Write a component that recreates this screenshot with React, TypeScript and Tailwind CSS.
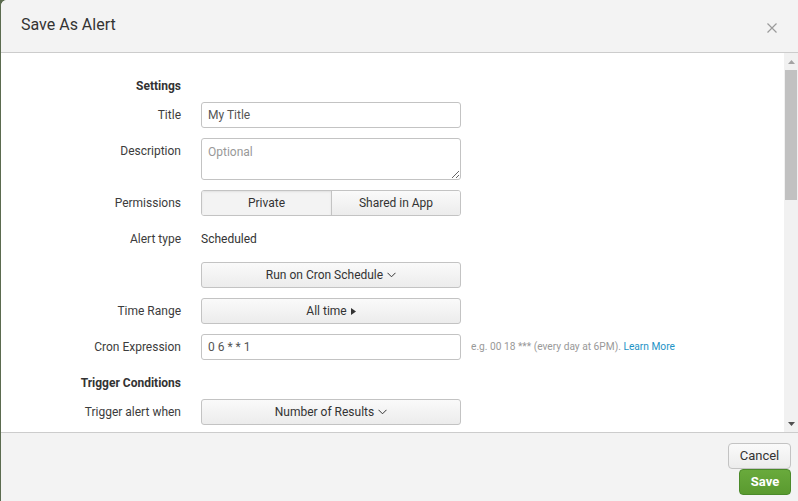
import React from 'react';

const ChevronDown = () => (
    <svg width="9" height="6" viewBox="0 0 9 6" fill="none" stroke="currentColor" strokeWidth="1" className="ml-1 inline-block">
        <path d="M0.5 0.8 4.5 4.8 8.5 0.8" />
    </svg>
);

const CaretRight = () => (
    <svg width="5" height="7" viewBox="0 0 5 7" fill="currentColor" className="ml-1 inline-block">
        <path d="M0 0 5 3.5 0 7z" />
    </svg>
);

const Label = ({ children, bold }: { children: React.ReactNode; bold?: boolean }) => (
    <div className={`w-[180px] shrink-0 text-right ${bold ? 'font-bold text-[#333]' : 'text-[#3c3c3c]'}`}>{children}</div>
);

const btn = "w-[260px] h-[26px] rounded-[3px] border border-[#c3c3c3] bg-gradient-to-b from-[#fafafa] to-[#ececec] text-[12px] text-[#333] flex items-center justify-center";

const App = () => {
    return (
        <div className="w-[798px] h-[501px] bg-[#5b6b4f] overflow-hidden" style={{ fontFamily: 'Roboto, "Liberation Sans", sans-serif' }}>
            <div className="ml-[1px] h-full bg-white rounded-tl-[6px] flex flex-col overflow-hidden">
                {/* header */}
                <div className="h-[53px] shrink-0 bg-[#f3f3f3] border-b border-[#cccccc] flex items-center pl-[20px] pr-[21px]">
                    <h1 className="text-[16px] text-[#333] flex-1 -mt-[3px]">Save As Alert</h1>
                    <svg width="10" height="10" viewBox="0 0 10 10" stroke="#9a9a9a" strokeWidth="1.2" className="mt-[4px]">
                        <path d="M0.5 0.5 9.5 9.5M9.5 0.5 0.5 9.5" />
                    </svg>
                </div>

                {/* body */}
                <div className="flex-1 flex min-h-0">
                    <div className="flex-1 pt-[23px] text-[12px]">
                        <div className="flex items-center h-[20px] mb-[6px]"><Label bold>Settings</Label></div>

                        <div className="flex items-center gap-[20px] mb-[10px]">
                            <Label>Title</Label>
                            <div className="w-[260px] h-[26px] rounded-[3px] border border-[#c3c3c3] px-[6px] flex items-center text-[#555]">My Title</div>
                        </div>

                        <div className="flex items-start gap-[20px] mb-[10px]">
                            <div className="pt-[4px]"><Label>Description</Label></div>
                            <textarea placeholder="Optional" className="w-[260px] h-[42px] rounded-[3px] border border-[#c3c3c3] px-[6px] py-[4px] text-[12px] text-[#555] placeholder:text-[#999] outline-none" />
                        </div>

                        <div className="flex items-center gap-[20px] mb-[10px]">
                            <Label>Permissions</Label>
                            <div className="flex w-[260px] h-[26px] rounded-[3px] border border-[#c3c3c3] overflow-hidden text-[#333]">
                                <div className="w-[130px] bg-[#f3f3f3] border-r border-[#c3c3c3] flex items-center justify-center shadow-[inset_0_1px_2px_rgba(0,0,0,0.08)]">Private</div>
                                <div className="flex-1 bg-gradient-to-b from-[#fafafa] to-[#ececec] flex items-center justify-center">Shared in App</div>
                            </div>
                        </div>

                        <div className="flex items-center gap-[20px] h-[26px] mb-[10px]">
                            <Label>Alert type</Label>
                            <div className="text-[#333]">Scheduled</div>
                        </div>

                        <div className="flex items-center gap-[20px] mb-[10px]">
                            <Label>{''}</Label>
                            <div className={btn}>Run on Cron Schedule <ChevronDown /></div>
                        </div>

                        <div className="flex items-center gap-[20px] mb-[10px]">
                            <Label>Time Range</Label>
                            <div className={btn}>All time <CaretRight /></div>
                        </div>

                        <div className="flex items-center gap-[20px] mb-[10px]">
                            <Label>Cron Expression</Label>
                            <div className="w-[260px] h-[26px] rounded-[3px] border border-[#c3c3c3] px-[6px] flex items-center text-[#555]">0 6 * * 1</div>
                            <div className="-ml-[10px] text-[10.2px] text-[#999]">e.g. 00 18 *** (every day at 6PM). <span className="text-[#1e93c6]">Learn More</span></div>
                        </div>

                        <div className="flex items-center h-[23px] pt-[3px] mb-[6px]"><Label bold>Trigger Conditions</Label></div>

                        <div className="flex items-center gap-[20px]">
                            <Label>Trigger alert when</Label>
                            <div className={btn}>Number of Results <ChevronDown /></div>
                        </div>
                    </div>

                    {/* scrollbar */}
                    <div className="w-[14px] shrink-0 bg-[#f1f1f1] flex flex-col items-center">
                        <div className="h-[17px] flex items-center justify-center">
                            <svg width="7" height="4" viewBox="0 0 7 4" fill="#a3a3a3"><path d="M0 4 3.5 0 7 4z" /></svg>
                        </div>
                        <div className="w-[12px] h-[130px] bg-[#c1c1c1]" />
                        <div className="flex-1" />
                        <div className="h-[17px] flex items-center justify-center">
                            <svg width="7" height="4" viewBox="0 0 7 4" fill="#505050"><path d="M0 0 3.5 4 7 0z" /></svg>
                        </div>
                    </div>
                </div>

                {/* footer */}
                <div className="h-[69px] shrink-0 bg-[#f3f3f3] border-t border-[#cccccc] flex flex-col items-end pr-[7px] pt-[10px]">
                    <div className="w-[63px] h-[26px] rounded-[4px] border border-[#c3c3c3] bg-gradient-to-b from-[#fafafa] to-[#ececec] text-[13px] text-[#333] flex items-center justify-center">Cancel</div>
                    <div className="w-[52px] h-[26px] rounded-[4px] border border-[#4b8a2a] bg-gradient-to-b from-[#69aa3c] to-[#5a9a2f] text-[13px] font-bold text-white flex items-center justify-center">Save</div>
                </div>
            </div>
        </div>
    );
};

export default App;
